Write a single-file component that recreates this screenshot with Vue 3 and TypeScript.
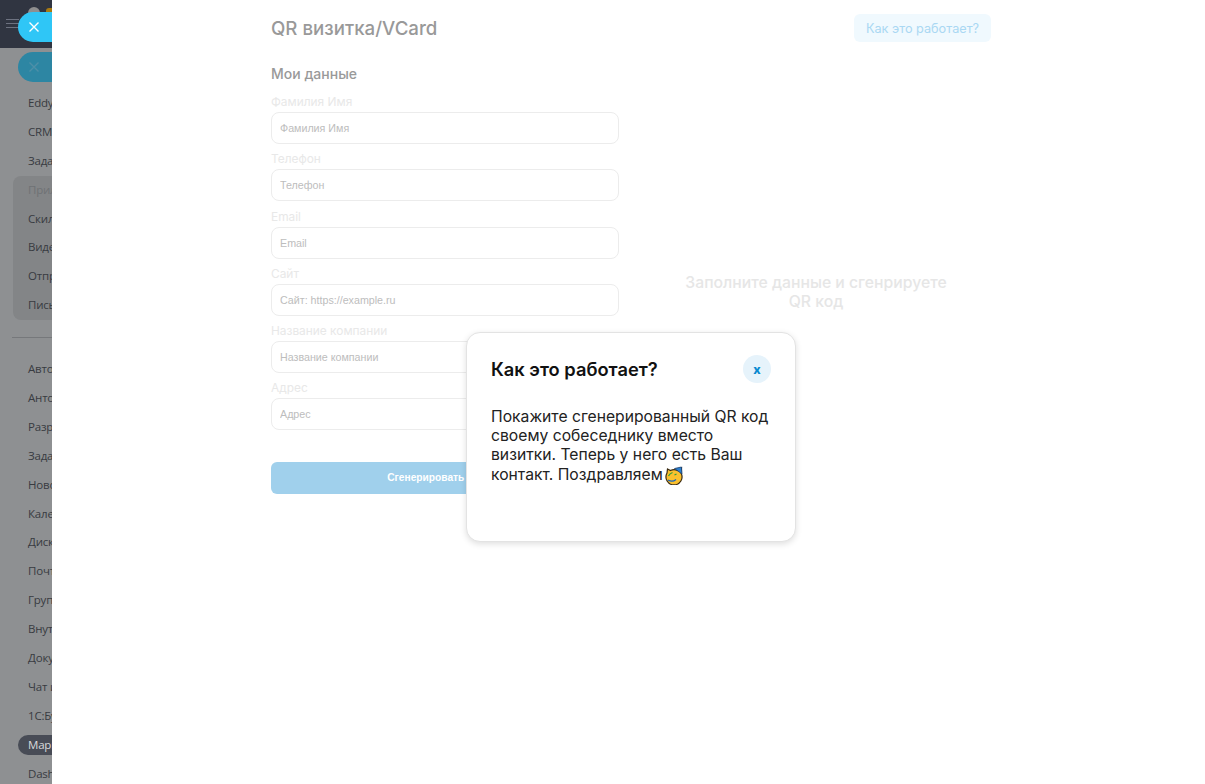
<script setup lang="ts">
const topItems = ['Eddy.Chat', 'CRM', 'Задачи и проекты']
const groupItems = ['Скилы', 'Видеозвонки', 'Отправка', 'Письма']
const mainItems = [
  'Автоматизация', 'Антон', 'Разработка', 'Задачи', 'Новости', 'Календарь', 'Диск', 'Почта',
  'Группы', 'Внутренние', 'Документы', 'Чат и звонки', '1С:Бухгалтерия',
]
const fields = [
  { label: 'Фамилия Имя', placeholder: 'Фамилия Имя' },
  { label: 'Телефон', placeholder: 'Телефон' },
  { label: 'Email', placeholder: 'Email' },
  { label: 'Сайт', placeholder: 'Сайт: https://example.ru' },
  { label: 'Название компании', placeholder: 'Название компании' },
  { label: 'Адрес', placeholder: 'Адрес' },
]
</script>

<template>
  <div class="page">
    <!-- sidebar, dimmed behind the slider -->
    <aside class="sidebar">
      <div class="topbar">
        <div class="burger"><i></i><i></i><i></i></div>
        <span class="cloud"></span>
        <span class="orange"></span>
      </div>
      <nav class="menu">
        <div class="item" v-for="name in topItems" :key="name">{{ name }}</div>
        <div class="group">
          <div class="item muted">Приложения</div>
          <div class="item" v-for="name in groupItems" :key="name">{{ name }}</div>
        </div>
        <div class="sep"></div>
        <div class="item" v-for="name in mainItems" :key="name">{{ name }}</div>
        <div class="item active"><span>Маркетинг</span></div>
        <div class="item">Dashboard</div>
      </nav>
    </aside>

    <div class="tab tab_main">
      <svg width="12" height="12" viewBox="0 0 12 12"><path d="M1.5 1.5l9 9M10.5 1.5l-9 9" stroke="#fff" stroke-width="1.4" fill="none" /></svg>
    </div>
    <div class="tab tab_dim">
      <svg width="12" height="12" viewBox="0 0 12 12"><path d="M1.5 1.5l9 9M10.5 1.5l-9 9" stroke="#4d8fa8" stroke-width="1.4" fill="none" /></svg>
    </div>

    <!-- slider -->
    <main class="panel">
      <div class="content">
        <header class="head">
          <h1>QR визитка/VCard</h1>
          <button class="how">Как это работает?</button>
        </header>

        <div class="columns">
          <form class="form">
            <h2>Мои данные</h2>
            <label v-for="f in fields" :key="f.label" class="field">
              <span>{{ f.label }}</span>
              <input type="text" :placeholder="f.placeholder">
            </label>
            <button type="button" class="generate">Сгенерировать QR код</button>
          </form>
          <p class="hint">Заполните данные и сгенрируете<br>QR код</p>
        </div>
      </div>
    </main>

    <!-- popup -->
    <section class="modal">
      <div class="modal_head">
        <h3>Как это работает?</h3>
        <button class="close">x</button>
      </div>
      <p>
        Покажите сгенерированный QR код своему собеседнику вместо визитки. Теперь у него есть Ваш контакт. Поздравляем<svg class="emoji" width="19" height="21" viewBox="0 -1 19 21">
          <path d="M2.500 4l3 1.500a8 8 0 0 1 7 0l4-2.500-.5 5a8 8 0 1 1-14 0z" fill="#fbc02d" stroke="#3a2a10" stroke-width="1.200" />
          <path d="M9.500 3.500L16.500 2l.5 7z" fill="#2a7fd0" stroke="#1c3c66" stroke-width=".8" />
          <path d="M3.500 11c1-2 2.500-3 4-3.500M9.500 10l2-1" stroke="#2e9d42" stroke-width="1.200" fill="none" />
          <path d="M3 15c2.500 1.500 6 1.200 8-.5" stroke="#1565c0" stroke-width="1.200" fill="none" />
        </svg>
      </p>
    </section>
  </div>
</template>

<style>
html, body {
  margin: 0;
  background: #fff;
  overflow: hidden;
}
</style>

<style scoped>
.page {
  position: relative;
  width: 1205px;
  height: 784px;
  overflow: hidden;
  font-family: Inter, "Noto Sans", sans-serif;
}

/* sidebar */
.sidebar {
  width: 52px;
  height: 784px;
  background: #8e9092;
  overflow: hidden;
}
.topbar {
  position: relative;
  height: 48px;
  background: #303541;
}
.burger {
  position: absolute;
  left: 6px;
  top: 19px;
  display: flex;
  flex-direction: column;
  gap: 3px;
}
.burger i {
  display: block;
  width: 13px;
  height: 1px;
  background: #6d7280;
}
.cloud {
  position: absolute;
  left: 28px;
  top: 7px;
  width: 12px;
  height: 8px;
  border-radius: 6px 6px 0 0;
  background: #8f8f8f;
}
.orange {
  position: absolute;
  left: 46px;
  top: 8px;
  width: 10px;
  height: 8px;
  border-radius: 3px 0 0 0;
  background: #a87a12;
}
.menu {
  width: 200px;
  padding-top: 41px;
  font-family: "Open Sans", "Noto Sans", sans-serif;
  font-size: 11.5px;
  letter-spacing: -.2px;
  color: #383b41;
}
.item {
  height: 28.9px;
  line-height: 28.9px;
  padding-left: 28px;
  white-space: nowrap;
}
.muted {
  color: #6f7275;
}
.group {
  margin-left: 13px;
  border-radius: 8px;
  background: #838587;
}
.group .item {
  padding-left: 15px;
}
.sep {
  height: 1px;
  margin: 17px 0 17px 12px;
  background: #76787b;
}
.active span {
  display: inline-block;
  height: 20px;
  line-height: 20px;
  margin-left: -10px;
  padding: 0 10px;
  border-radius: 10px;
  background: #484c56;
  color: #d8d9db;
}

/* tabs on the slider edge */
.tab {
  position: absolute;
  left: 18px;
  width: 34px;
  height: 30px;
  display: flex;
  align-items: center;
  justify-content: center;
  padding-right: 2px;
  box-sizing: border-box;
  border-radius: 15px 0 0 15px;
}
.tab_main {
  top: 12px;
  background: #2fc6f6;
}
.tab_dim {
  top: 52px;
  background: #2d86a3;
}

/* slider */
.panel {
  position: absolute;
  left: 52px;
  top: 0;
  right: 0;
  bottom: 0;
  padding-left: 219px;
  background: #fff;
}
.content {
  width: 720px;
}
.head {
  display: flex;
  align-items: center;
  justify-content: space-between;
  padding-top: 14px;
  height: 28px;
}
h1 {
  margin: 0;
  font-size: 18.7px;
  font-weight: 500;
  color: #999;
}
.how {
  width: 137px;
  height: 28px;
  padding: 0;
  border: none;
  border-radius: 6px;
  background: #f0f9fe;
  color: #aad8f3;
  font-family: inherit;
  font-size: 12.7px;
}
.columns {
  display: grid;
  grid-template-columns: 348px 350px;
  column-gap: 22px;
}
.form {
  display: flex;
  flex-direction: column;
}
h2 {
  margin: 24px 0 0;
  height: 29px;
  line-height: 16px;
  font-size: 14px;
  font-weight: 500;
  color: #999;
}
.field {
  display: flex;
  flex-direction: column;
  margin-bottom: 8.3px;
}
.field span {
  height: 14px;
  line-height: 14px;
  font-size: 11.9px;
  color: #e8e8e8;
}
.field input {
  box-sizing: border-box;
  height: 32px;
  margin-top: 3px;
  padding: 0 8px;
  border: 1px solid #ececec;
  border-radius: 8px;
  outline: none;
  background: #fff;
  font-family: "Liberation Sans", Arial, sans-serif;
  font-size: 10.7px;
}
.field input::placeholder {
  color: #bdbdbd;
  opacity: 1;
}
.generate {
  height: 32px;
  margin-top: 23.2px;
  border: none;
  border-radius: 6px;
  background: #a0d0ec;
  color: #fff;
  font-family: "Liberation Sans", Arial, sans-serif;
  font-size: 10.2px;
  font-weight: 700;
}
.hint {
  margin: 231px 0 0;
  font-size: 15.75px;
  font-weight: 500;
  line-height: 19px;
  text-align: center;
  color: #e6e6e6;
}

/* popup */
.modal {
  position: absolute;
  left: 466px;
  top: 332px;
  box-sizing: border-box;
  width: 330px;
  height: 210px;
  padding: 21px 24px;
  border: 1px solid #e3e3e3;
  border-radius: 14px;
  background: #fff;
  box-shadow: 0 2px 6px rgba(0, 0, 0, .13);
}
.modal_head {
  display: flex;
  align-items: center;
  justify-content: space-between;
  height: 30px;
}
h3 {
  margin: 0;
  font-size: 18.3px;
  font-weight: 600;
  color: #111;
}
.close {
  width: 28px;
  height: 28px;
  padding: 0;
  border: none;
  border-radius: 50%;
  background: #e6f3fb;
  color: #0a8ad0;
  font-family: inherit;
  font-size: 12.5px;
  font-weight: 800;
}
.modal p {
  margin: 23px 0 0;
  font-size: 15.7px;
  line-height: 19px;
  color: #222;
}
.emoji {
  vertical-align: -5px;
  margin-left: 2px;
}
</style>
